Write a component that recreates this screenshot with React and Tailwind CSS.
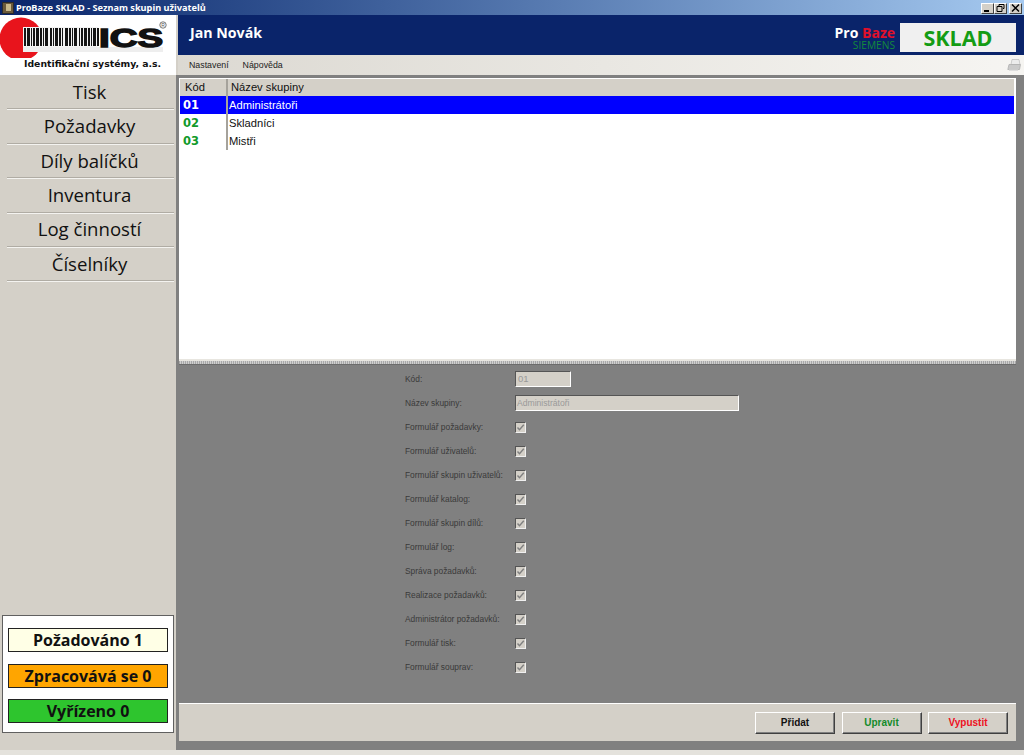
const navItems = ["Tisk", "Požadavky", "Díly balíčků", "Inventura", "Log činností", "Číselníky"];
const groups = [
  ["01", "Administrátoři"],
  ["02", "Skladníci"],
  ["03", "Mistři"],
];
const perms = [
  "Formulář požadavky:",
  "Formulář uživatelů:",
  "Formulář skupin uživatelů:",
  "Formulář katalog:",
  "Formulář skupin dílů:",
  "Formulář log:",
  "Správa požadavků:",
  "Realizace požadavků:",
  "Administrátor požadavků:",
  "Formulář tisk:",
  "Formulář souprav:",
];
const bars = [2,1,3,1,1,1,2,1,3,1,2,1,1,1,3,2,2,1,1,1,3,1,2,1,1,2,3,1,2,1,1,1,3,2,1,1,2,1,3,1,2,1,1,1,3,1,2,1];

function Logo() {
  let x = 24;
  const rects = bars.map((w, i) => {
    const r = i % 2 === 0 ? <rect key={i} x={x} y="28" width={w} height="18" fill="#151515" /> : null;
    x += w;
    return r;
  });
  return (
    <svg width="176" height="43" viewBox="0 15 176 43" className="block">
      <circle cx="21" cy="39" r="21.5" fill="#e8141c" />
      <rect x="23" y="27" width="75" height="20" fill="#f4f4f4" />
      <rect x="23" y="47" width="140" height="5" fill="#eeeeee" />
      {rects}
      <text x="99" y="46.5" fontFamily="'Liberation Sans', sans-serif" fontWeight="700" fontSize="25" stroke="#111" strokeWidth="1.4" fill="#111" textLength="64" lengthAdjust="spacingAndGlyphs">ICS</text>
      <circle cx="163" cy="25" r="3.2" fill="none" stroke="#555" strokeWidth="0.8" />
      <text x="161.3" y="27" fontFamily="'Liberation Sans', sans-serif" fontSize="5" fill="#555">R</text>
    </svg>
  );
}

function Printer() {
  return (
    <svg width="14" height="14" viewBox="0 0 14 14" className="block">
      <path d="M5 1.5h7l1 5H4z" fill="#ececec" stroke="#c2c2c2" strokeWidth="0.8" />
      <path d="M2 6.5h11.5l-1 5H0.8z" fill="#cacaca" stroke="#b0b0b0" strokeWidth="0.8" />
      <path d="M2 11.5h9v1.5h-9z" fill="#dedede" />
    </svg>
  );
}

function WinBtn({ children }) {
  return (
    <div className="w-[13px] h-[11px] bg-[#d4d0c8] border border-t-white border-l-white border-r-[#404040] border-b-[#404040] flex items-center justify-center">
      <svg width="9" height="8" viewBox="0 0 9 8" className="block">{children}</svg>
    </div>
  );
}

function Btn({ label, color }) {
  return (
    <button className={`w-[80px] h-[22px] bg-[#d4d0c8] border border-t-white border-l-white border-r-[#404040] border-b-[#404040] text-[10px] font-bold leading-none shadow-[inset_-1px_-1px_0_#808080] ${color}`}>
      {label}
    </button>
  );
}

function CheckBox() {
  return (
    <div className="w-[11px] h-[11px] bg-[#d4d0c8] border border-t-[#555] border-l-[#555] border-r-[#f0f0f0] border-b-[#f0f0f0] flex items-center justify-center">
      <svg width="9" height="9" viewBox="0 0 9 9" className="block">
        <path d="M1.5 4.5 L3.5 6.8 L7.8 1.8" fill="none" stroke="#808080" strokeWidth="1.4" />
      </svg>
    </div>
  );
}

export default function App() {
  return (
    <div className="w-[1024px] h-[755px] overflow-hidden flex flex-col bg-[#d4d0c8] font-['Liberation_Sans',sans-serif]">
      {/* title bar */}
      <div className="h-[15px] shrink-0 flex items-center bg-gradient-to-r from-[#0a246a] to-[#a6caf0] pl-[2px] pr-[2px]">
        <div className="w-[12px] h-[12px] bg-[#6b5a3a] border border-[#2b2b2b] mr-[2px] flex items-center justify-center">
          <div className="w-[5px] h-[7px] bg-[#c9b98a]" />
        </div>
        <span className="text-white font-bold text-[9.2px] font-['Noto_Sans',sans-serif] leading-none">ProBaze SKLAD - Seznam skupin uživatelů</span>
        <div className="ml-auto flex mt-[1px]">
          <WinBtn><rect x="1" y="6" width="5" height="2" fill="#000" /></WinBtn>
          <WinBtn>
            <path d="M3 0.5h5v4h-1M3 0.5v1.5M1 2.5h5v5h-5z" fill="none" stroke="#000" />
          </WinBtn>
          <div className="w-[2px]" />
          <WinBtn><path d="M1 0.5L8 7.5M8 0.5L1 7.5" stroke="#000" strokeWidth="1.5" /></WinBtn>
        </div>
      </div>

      <div className="flex-1 flex min-h-0">
        {/* sidebar */}
        <aside className="w-[176px] shrink-0 flex flex-col">
          <div className="h-[60px] bg-white flex flex-col">
            <Logo />
            <div className="h-[12px] pl-[24px] text-[9.3px] font-bold leading-[12px] text-[#111] font-['DejaVu_Sans',sans-serif] whitespace-nowrap">
              Identifikační systémy, a.s.
            </div>
          </div>
          <nav className="flex flex-col">
            {navItems.map((t) => (
              <div key={t} className="h-[34.4px] ml-[7px] mr-[2px] pt-[1px] pr-[2px] border-b border-b-[#b0aca4] shadow-[0_1px_0_#f4f3f0] flex items-center justify-center text-[18.6px] leading-none text-[#111] font-['Open_Sans',sans-serif]">
                {t}
              </div>
            ))}
          </nav>
          <div className="mt-auto mb-[17px] mx-[2px] h-[118px] shrink-0 bg-white border border-[#606060] px-[5px] pt-[12px] flex flex-col gap-[11.5px] font-['Open_Sans',sans-serif] text-[16px] font-bold leading-none text-[#111]">
            <div className="h-[24px] shrink-0 bg-[#ffffe6] border border-[#222] flex items-center justify-center">Požadováno 1</div>
            <div className="h-[24px] shrink-0 bg-[#ffa500] border border-[#222] flex items-center justify-center">Zpracovává se 0</div>
            <div className="h-[24px] shrink-0 bg-[#2ec52e] border border-[#222] flex items-center justify-center">Vyřízeno 0</div>
          </div>
        </aside>

        {/* main */}
        <main className="flex-1 min-w-0 flex flex-col">
          <header className="h-[40px] ml-[2px] shrink-0 bg-[#0a246a] flex items-center pl-[12px] pr-[8px]">
            <span className="text-white text-[14.2px] font-bold font-['Open_Sans',sans-serif] -mt-[4px]">Jan Novák</span>
            <div className="ml-auto flex flex-col items-end mr-[5px] pt-[7px] font-['Open_Sans',sans-serif]">
              <span className="text-[14px] font-bold leading-[14px]">
                <span className="text-white">Pro </span>
                <span className="text-[#e0102a]">Baze</span>
              </span>
              <span className="text-[10.2px] text-[#138a3c] leading-[11px]">SIEMENS</span>
            </div>
            <div className="w-[116px] h-[29px] self-end mb-[3px] bg-[#f0f0f0] flex items-center justify-center text-[21.5px] font-bold leading-none text-[#149c14] font-['Open_Sans',sans-serif]">
              SKLAD
            </div>
          </header>

          <div className="h-[20px] ml-[2px] shrink-0 bg-gradient-to-r from-[#dcd9d2] to-[#f6f5f2] flex items-center pl-[11px] pr-[3px] text-[8.8px] text-[#222]">
            <span className="mr-[14px] mt-[2px]">Nastavení</span>
            <span className="mt-[2px]">Nápověda</span>
            <div className="ml-auto"><Printer /></div>
          </div>

          <div className="flex-1 min-h-0 flex flex-col border-l-[3px] border-r-[8px] border-t-[3px] border-[#808080] bg-[#808080]">
            {/* list */}
            <div className="h-[281px] shrink-0 bg-white pl-[1px] pr-[2px] pt-[1px]">
              <div className="flex h-[17px] bg-[#d4d0c8] text-[11.2px] text-[#111] items-center">
                <div className="w-[46px] pl-[5px]">Kód</div>
                <div className="pl-[3px] border-l-2 border-l-[#a5a29b] h-full flex items-center">Název skupiny</div>
              </div>
              {groups.map(([code, name], i) => (
                <div key={code} className={`flex h-[18px] items-center text-[11.2px] ${i === 0 ? "bg-[#0000ff] text-white" : "text-[#111]"}`}>
                  <div className={`w-[46px] pl-[3px] font-bold font-['DejaVu_Sans',sans-serif] text-[11.5px] pt-[2px] ${i === 0 ? "text-white" : "text-[#119a2a]"}`}>{code}</div>
                  <div className="pl-[1px] border-l-2 border-l-[#a5a29b] h-full flex items-center">{name}</div>
                </div>
              ))}
            </div>
            {/* splitter */}
            <div className="h-[6px] shrink-0 border-t-2 border-t-[#e8e6e0] border-b border-b-[#6c6c6c] bg-[repeating-linear-gradient(90deg,#a8a8a8_0px,#a8a8a8_1px,#d0d0d0_1px,#d0d0d0_2px)]" />
            {/* form */}
            <div className="flex-1 min-h-0 bg-[#808080] pt-[2px] pl-[226px]">
              <div className="flex items-center h-[24px]">
                <span className="w-[110px] text-[8.4px] text-[#3a3a3a]">Kód:</span>
                <div className="w-[56px] h-[16px] bg-[#d4d0c8] border border-t-[#555] border-l-[#555] border-r-white border-b-white text-[9.5px] text-[#999] pl-[2px] leading-[14px]">01</div>
              </div>
              <div className="flex items-center h-[24px]">
                <span className="w-[110px] text-[8.4px] text-[#3a3a3a]">Název skupiny:</span>
                <div className="w-[224px] h-[16px] bg-[#d4d0c8] border border-t-[#555] border-l-[#555] border-r-white border-b-white text-[8.6px] text-[#999] pl-[1px] leading-[14px]">Administrátoři</div>
              </div>
              {perms.map((p) => (
                <div key={p} className="flex items-center h-[24px]">
                  <span className="w-[110px] text-[8.4px] text-[#3a3a3a] whitespace-nowrap">{p}</span>
                  <CheckBox />
                </div>
              ))}
            </div>
            {/* buttons */}
            <div className="h-[38px] shrink-0 bg-[#d4d0c8] border-t border-t-white flex items-center justify-end gap-[6.5px] pr-[8px] pt-[1px]">
              <Btn label="Přidat" color="text-[#111]" />
              <Btn label="Upravit" color="text-[#138a2a]" />
              <Btn label="Vypustit" color="text-[#ee1122]" />
            </div>
            <div className="h-[9px] shrink-0 bg-[#808080]" />
          </div>
        </main>
      </div>

      <div className="h-[5px] shrink-0 bg-[#e4e2dc]" />
    </div>
  );
}
